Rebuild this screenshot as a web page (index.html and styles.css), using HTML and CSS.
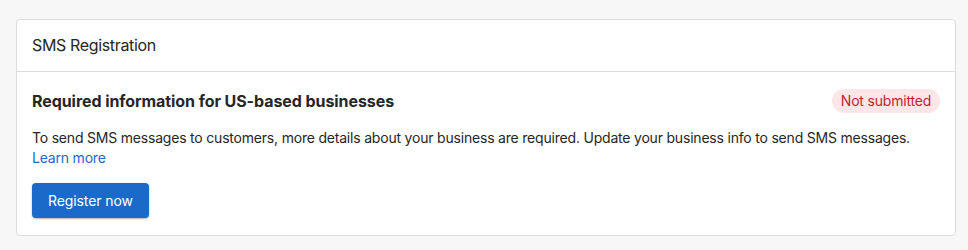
FILE: index.html
```html
<!DOCTYPE html>
<html lang="en">

<head>
    <meta charset="UTF-8">
    <meta name="viewport" content="width=device-width, initial-scale=1.0">
    <title>SMS Registration</title>
    <link rel="stylesheet" href="styles.css">
</head>

<body>
    <div class="card">
        <div class="card-header">SMS Registration</div>
        <div class="card-body">
            <div class="row">
                <h2 class="title">Required information for US-based businesses</h2>
                <span class="badge">Not submitted</span>
            </div>
            <p class="desc">
                To send SMS messages to customers, more details about your business are required. Update your business info to send SMS messages.<br>
                <a href="#" class="link">Learn more</a>
            </p>
            <button class="btn">Register now</button>
        </div>
    </div>
</body>

</html>
```

FILE: styles.css
```css
body {
    margin: 0;
    padding: 19px 12px 0 16px;
    background: #f7f7f7;
    font-family: Inter, "Noto Sans", sans-serif;
    color: #262626;
}

.card {
    background: #fff;
    border: 1px solid #dcdcdc;
    border-radius: 4px;
}

.card-header {
    padding: 15px 15px 16px;
    font-size: 16px;
    line-height: 20px;
    letter-spacing: -0.35px;
    border-bottom: 1px solid #dcdcdc;
}

.card-body {
    padding: 16px 15px 17px;
}

.row {
    display: flex;
    justify-content: space-between;
    align-items: center;
}

.title {
    margin: 0;
    font-size: 16px;
    font-weight: 700;
    line-height: 26px;
    letter-spacing: -0.07px;
}

.badge {
    display: inline-block;
    height: 24px;
    line-height: 24px;
    padding: 0 9px;
    border-radius: 12px;
    background: #fde6e8;
    color: #c41f2b;
    font-size: 14px;
    letter-spacing: -0.2px;
}

.desc {
    margin: 14px 0 0;
    font-size: 14px;
    line-height: 20px;
    letter-spacing: -0.2px;
}

.link {
    color: #1b6ac9;
    text-decoration: none;
}

.btn {
    margin-top: 15px;
    height: 35px;
    padding: 0 16px;
    border: none;
    border-radius: 4px;
    background: #1b6ac9;
    color: #fff;
    font-family: inherit;
    font-size: 14px;
    letter-spacing: -0.1px;
    box-shadow: 0 1px 2px rgba(0, 0, 0, 0.3);
    cursor: pointer;
}
```
